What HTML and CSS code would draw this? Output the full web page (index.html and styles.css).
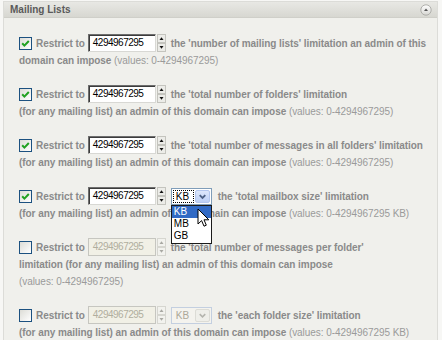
FILE: index.html
```html
<!DOCTYPE html>
<html>
<head>
<meta charset="utf-8">
<link rel="stylesheet" href="styles.css">
</head>
<body>
<div class="panel">
  <div class="panel-head">
    <span class="title">Mailing Lists</span>
    <svg class="collapse" width="12" height="12" viewBox="0 0 12 12">
      <defs>
        <linearGradient id="cg" x1="0" y1="0" x2="0" y2="1">
          <stop offset="0" stop-color="#ffffff"/>
          <stop offset="1" stop-color="#d6d6d2"/>
        </linearGradient>
      </defs>
      <circle cx="6" cy="6" r="5.2" fill="url(#cg)" stroke="#a8a8a4" stroke-width="0.9"/>
      <path d="M4 7 L6 4.6 L8 7 Z" fill="#555"/>
    </svg>
  </div>
  <div class="panel-body">

    <div class="opt">
      <div class="line1">
        <span class="cb"><svg width="11" height="11" viewBox="0 0 11 11"><path d="M2.2 5.2 L4.4 7.6 L8.8 3" fill="none" stroke="#21a121" stroke-width="2"/></svg></span>
        <span class="lbl">Restrict to</span>
        <span class="num">4294967295</span>
        <svg class="spin" width="9" height="18" viewBox="0 0 9 18"><rect x="0" y="0" width="9" height="18" fill="#e2e2dc"/><rect x="0.5" y="0.5" width="8" height="8" fill="#ecece8" stroke="#c4c4be"/><rect x="0.5" y="9.5" width="8" height="8" fill="#ecece8" stroke="#c4c4be"/><path d="M2.5 6 L4.5 3.2 L6.5 6 Z" fill="#111"/><path d="M2.5 12 L4.5 14.8 L6.5 12 Z" fill="#111"/></svg>
        <span class="txt">the 'number of mailing lists' limitation an admin of this</span>
      </div>
      <div class="more">domain can impose <span class="vals">(values: 0-4294967295)</span></div>
    </div>

    <div class="opt">
      <div class="line1">
        <span class="cb"><svg width="11" height="11" viewBox="0 0 11 11"><path d="M2.2 5.2 L4.4 7.6 L8.8 3" fill="none" stroke="#21a121" stroke-width="2"/></svg></span>
        <span class="lbl">Restrict to</span>
        <span class="num">4294967295</span>
        <svg class="spin" width="9" height="18" viewBox="0 0 9 18"><rect x="0" y="0" width="9" height="18" fill="#e2e2dc"/><rect x="0.5" y="0.5" width="8" height="8" fill="#ecece8" stroke="#c4c4be"/><rect x="0.5" y="9.5" width="8" height="8" fill="#ecece8" stroke="#c4c4be"/><path d="M2.5 6 L4.5 3.2 L6.5 6 Z" fill="#111"/><path d="M2.5 12 L4.5 14.8 L6.5 12 Z" fill="#111"/></svg>
        <span class="txt">the 'total number of folders' limitation</span>
      </div>
      <div class="more">(for any mailing list) an admin of this domain can impose <span class="vals">(values: 0-4294967295)</span></div>
    </div>

    <div class="opt">
      <div class="line1">
        <span class="cb"><svg width="11" height="11" viewBox="0 0 11 11"><path d="M2.2 5.2 L4.4 7.6 L8.8 3" fill="none" stroke="#21a121" stroke-width="2"/></svg></span>
        <span class="lbl">Restrict to</span>
        <span class="num">4294967295</span>
        <svg class="spin" width="9" height="18" viewBox="0 0 9 18"><rect x="0" y="0" width="9" height="18" fill="#e2e2dc"/><rect x="0.5" y="0.5" width="8" height="8" fill="#ecece8" stroke="#c4c4be"/><rect x="0.5" y="9.5" width="8" height="8" fill="#ecece8" stroke="#c4c4be"/><path d="M2.5 6 L4.5 3.2 L6.5 6 Z" fill="#111"/><path d="M2.5 12 L4.5 14.8 L6.5 12 Z" fill="#111"/></svg>
        <span class="txt">the 'total number of messages in all folders' limitation</span>
      </div>
      <div class="more">(for any mailing list) an admin of this domain can impose <span class="vals">(values: 0-4294967295)</span></div>
    </div>

    <div class="opt opt-top">
      <div class="line1">
        <span class="cb"><svg width="11" height="11" viewBox="0 0 11 11"><path d="M2.2 5.2 L4.4 7.6 L8.8 3" fill="none" stroke="#21a121" stroke-width="2"/></svg></span>
        <span class="lbl">Restrict to</span>
        <span class="num">4294967295</span>
        <svg class="spin" width="9" height="18" viewBox="0 0 9 18"><rect x="0" y="0" width="9" height="18" fill="#e2e2dc"/><rect x="0.5" y="0.5" width="8" height="8" fill="#ecece8" stroke="#c4c4be"/><rect x="0.5" y="9.5" width="8" height="8" fill="#ecece8" stroke="#c4c4be"/><path d="M2.5 6 L4.5 3.2 L6.5 6 Z" fill="#111"/><path d="M2.5 12 L4.5 14.8 L6.5 12 Z" fill="#111"/></svg>
        <span class="sel">
          <span class="sel-val focus">KB</span>
          <span class="sel-btn"><svg width="14" height="13" viewBox="0 0 14 13"><path d="M4 5 L7 8 L10 5" fill="none" stroke="#4d6185" stroke-width="2"/></svg></span>
          <span class="sel-list">
            <span class="sel-item on">KB</span>
            <span class="sel-item">MB</span>
            <span class="sel-item">GB</span>
            <svg class="cursor" width="13" height="20" viewBox="0 0 13 20"><path d="M1 1 L1 16 L4.6 12.6 L7 18.2 L9.3 17.2 L7 11.8 L11.8 11.8 Z" fill="#fff" stroke="#000" stroke-width="1" stroke-linejoin="round"/></svg>
          </span>
        </span>
        <span class="txt">the 'total mailbox size' limitation</span>
      </div>
      <div class="more">(for any mailing list) an admin of this domain can impose <span class="vals">(values: 0-4294967295 KB)</span></div>
    </div>

    <div class="opt">
      <div class="line1">
        <span class="cb"></span>
        <span class="lbl">Restrict to</span>
        <span class="num off">4294967295</span>
        <svg class="spin" width="9" height="18" viewBox="0 0 9 18"><rect x="0" y="0" width="9" height="18" fill="#ecece6"/><rect x="0.5" y="0.5" width="8" height="8" fill="#f2f2ee" stroke="#d6d6d0"/><rect x="0.5" y="9.5" width="8" height="8" fill="#f2f2ee" stroke="#d6d6d0"/><path d="M2.5 6 L4.5 3.2 L6.5 6 Z" fill="#a8a8a2"/><path d="M2.5 12 L4.5 14.8 L6.5 12 Z" fill="#a8a8a2"/></svg>
        <span class="txt">the 'total number of messages per folder'</span>
      </div>
      <div class="more">limitation (for any mailing list) an admin of this domain can impose</div>
      <div class="more"><span class="vals">(values: 0-4294967295)</span></div>
    </div>

    <div class="opt">
      <div class="line1">
        <span class="cb"></span>
        <span class="lbl">Restrict to</span>
        <span class="num off">4294967295</span>
        <svg class="spin" width="9" height="18" viewBox="0 0 9 18"><rect x="0" y="0" width="9" height="18" fill="#ecece6"/><rect x="0.5" y="0.5" width="8" height="8" fill="#f2f2ee" stroke="#d6d6d0"/><rect x="0.5" y="9.5" width="8" height="8" fill="#f2f2ee" stroke="#d6d6d0"/><path d="M2.5 6 L4.5 3.2 L6.5 6 Z" fill="#a8a8a2"/><path d="M2.5 12 L4.5 14.8 L6.5 12 Z" fill="#a8a8a2"/></svg>
        <span class="sel off">
          <span class="sel-val">KB</span>
          <span class="sel-btn"><svg width="14" height="13" viewBox="0 0 14 13"><path d="M4 5 L7 8 L10 5" fill="none" stroke="#b4b4ae" stroke-width="1.6"/></svg></span>
        </span>
        <span class="txt">the 'each folder size' limitation</span>
      </div>
      <div class="more">(for any mailing list) an admin of this domain can impose <span class="vals">(values: 0-4294967295 KB)</span></div>
    </div>

  </div>
</div>
</body>
</html>
```

FILE: styles.css
```css
html, body {
  margin: 0;
  padding: 0;
}
body {
  background: #f7f7f5;
  font-family: "Liberation Sans", Arial, sans-serif;
  width: 442px;
  height: 340px;
  overflow: hidden;
}
.panel {
  margin: 1px 4px 0 3px;
  border: 1px solid #dcdcd8;
  border-bottom: none;
  background: #f0f0ec;
  height: 339px;
  box-sizing: border-box;
}
.panel-head {
  height: 15px;
  display: flex;
  align-items: center;
  justify-content: space-between;
  padding: 0 5px 0 6px;
  background: linear-gradient(#e8e8e4, #d7d7d1);
  border-bottom: 1px solid #cfcfc9;
}
.title {
  font-weight: bold;
  font-size: 10px;
  color: #5a5a5a;
}
.collapse {
  display: block;
}
.panel-body {
  padding: 16px 0 0 15px;
  display: flex;
  flex-direction: column;
  gap: 16px;
}
.opt {
  position: relative;
}
.opt-top {
  z-index: 2;
}
.line1 {
  display: flex;
  align-items: center;
  height: 18px;
  white-space: nowrap;
  font-size: 10px;
  font-weight: bold;
  color: #8a8a8a;
  letter-spacing: -0.06px;
}
.cb {
  width: 11px;
  height: 11px;
  border: 1px solid #1c5180;
  background: linear-gradient(135deg, #dcdcd6, #ffffff);
  display: flex;
  align-items: center;
  justify-content: center;
  flex: none;
  margin-right: 4px;
}
.cb svg {
  display: block;
}
.lbl {
  margin-right: 3px;
}
.num {
  width: 62px;
  height: 14px;
  background: #fff;
  border: 1px solid;
  border-color: #6e6e6e #d8d8d4 #d8d8d4 #6e6e6e;
  box-shadow: inset 1px 1px 0 #3c3c3c;
  padding: 1px 0 1px 4px;
  box-sizing: content-box;
  font-weight: normal;
  font-size: 10px;
  letter-spacing: -0.5px;
  line-height: 14px;
  color: #000;
  flex: none;
}
.num.off {
  background: #f1f0e6;
  border-color: #c6c6c0;
  box-shadow: none;
  color: #b0ae9e;
}
.spin {
  display: block;
  flex: none;
  margin-left: 1px;
}
.txt {
  margin-left: 5px;
}
.sel {
  position: relative;
  display: flex;
  width: 41px;
  height: 17px;
  box-sizing: border-box;
  border: 1px solid #7f9db9;
  background: #fff;
  margin-left: 5px;
  flex: none;
  font-weight: normal;
  letter-spacing: 0;
}
.sel + .txt {
  margin-left: 6px;
}
.sel-val {
  flex: 1;
  margin: 1px;
  border: 1px dotted transparent;
  font-size: 10px;
  line-height: 11px;
  padding-left: 2px;
  color: #000;
}
.sel-val.focus {
  border-color: #000;
}
.sel-btn {
  width: 15px;
  margin: 1px 1px 1px 0;
  background: linear-gradient(#dde7fb, #bccff6);
  border: 1px solid #b3c6ee;
  border-radius: 2px;
  box-sizing: border-box;
  display: flex;
  align-items: center;
  justify-content: center;
}
.sel-btn svg {
  display: block;
}
.sel.off {
  border-color: #c3cfe0;
  background: #f4f3ee;
}
.sel.off .sel-val {
  color: #aca899;
}
.sel.off .sel-btn {
  background: #efefea;
  border-color: #dcdcd6;
}
.sel-list {
  position: absolute;
  left: -1px;
  top: 16px;
  width: 41px;
  box-sizing: border-box;
  border: 1px solid #1a1a1a;
  background: #fff;
  display: flex;
  flex-direction: column;
  padding: 0;
}
.sel-item {
  height: 12.4px;
  line-height: 12px;
  font-size: 10px;
  padding-left: 2px;
  color: #000;
}
.sel-item.on {
  background: #316ac5;
  color: #fff;
}
.cursor {
  position: absolute;
  left: 25px;
  top: 2px;
  display: block;
}
.more {
  font-size: 10px;
  line-height: 17px;
  font-weight: bold;
  color: #8a8a8a;
  white-space: nowrap;
  letter-spacing: -0.06px;
}
.vals {
  font-weight: normal;
  color: #9a9a9a;
}
```
